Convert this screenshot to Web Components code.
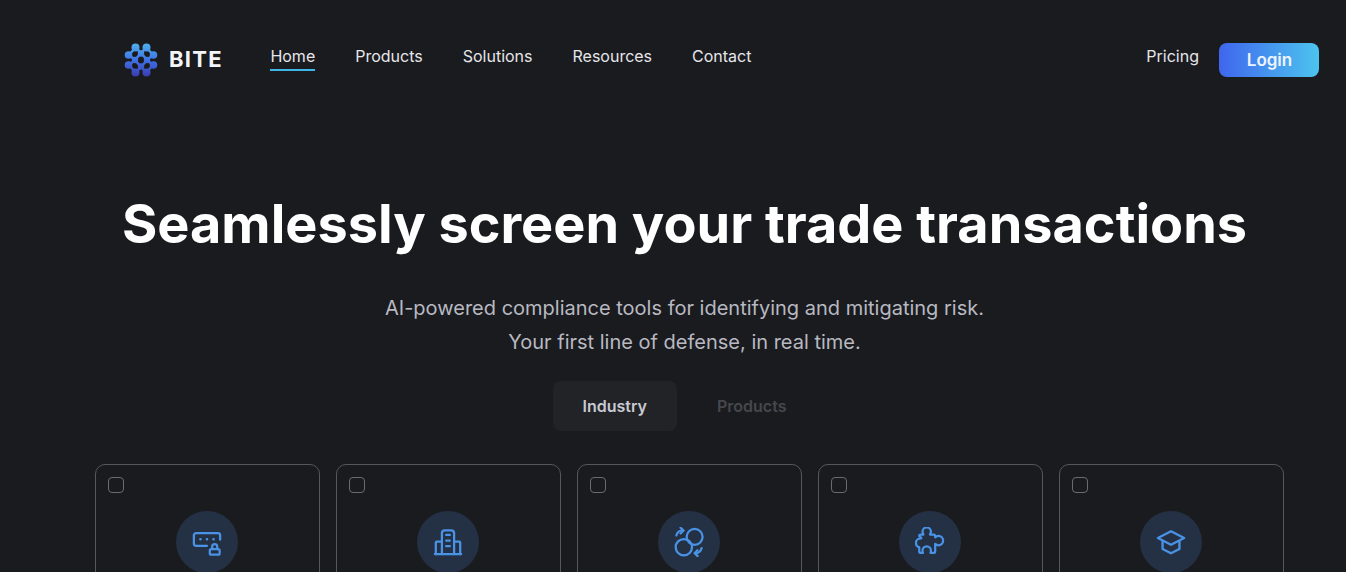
<!DOCTYPE html>
<html>
<head>
<meta charset="utf-8">
<style>
  html, body { margin: 0; height: 572px; overflow: hidden; background: #1a1b1f; }
  body { font-family: Inter, "Liberation Sans", sans-serif; color: #fff; }
</style>
</head>
<body>
<site-header>
  <nav-link active>Home</nav-link>
  <nav-link>Products</nav-link>
  <nav-link>Solutions</nav-link>
  <nav-link>Resources</nav-link>
  <nav-link>Contact</nav-link>
</site-header>
<hero-section>
  <span slot="title">Seamlessly screen your trade transactions</span>
  <span slot="line">AI-powered compliance tools for identifying and mitigating risk.</span>
  <span slot="line">Your first line of defense, in real time.</span>
</hero-section>
<tab-bar></tab-bar>
<card-row>
  <feature-card>
    <svg viewBox="0 0 32 32" fill="none" stroke="currentColor" stroke-width="2.4" stroke-linecap="round" stroke-linejoin="round">
      <path d="M16 20H4.500A2.500 2.500 0 0 1 2 17.500V8.900a2.500 2.500 0 0 1 2.500-2.500h23A2.500 2.500 0 0 1 30 8.900v4.600"/>
      <path d="M9 13h.01M16 13h.01M23 13h.01" stroke-width="2.800"/>
      <rect x="19" y="23.500" width="10.500" height="6" rx="1.600"/>
      <path d="M21.500 23.500V21a2.700 2.700 0 0 1 5.400 0v2.500"/>
    </svg>
  </feature-card>
  <feature-card>
    <svg viewBox="0 0 32 32" fill="none" stroke="currentColor" stroke-width="2.4" stroke-linecap="round" stroke-linejoin="round">
      <path d="M2 29h28"/>
      <path d="M9.500 29V6.500a3 3 0 0 1 3-3h7a3 3 0 0 1 3 3V29"/>
      <path d="M9.500 15.500H4a1 1 0 0 0-1 1V29M22.500 15.500H28a1 1 0 0 1 1 1V29"/>
      <path d="M14 8.500h4M14 14.500h4M14 20.500h4"/>
    </svg>
  </feature-card>
  <feature-card>
    <svg viewBox="0 0 32 32" fill="none" stroke="currentColor" stroke-width="2.4" stroke-linecap="round" stroke-linejoin="round">
      <circle cx="22" cy="10.500" r="8.500"/>
      <circle cx="10.500" cy="21.500" r="8.700"/>
      <path d="M2.500 9a7 7 0 0 1 7-5.500"/>
      <path d="M7 .8l3.200 2.900L7 6.900"/>
      <path d="M29.500 22.500a7 7 0 0 1-7 5.500"/>
      <path d="M25 24.800L22 28l3.200 3"/>
    </svg>
  </feature-card>
  <feature-card>
    <svg viewBox="0 0 32 32" fill="none" stroke="currentColor" stroke-width="2.4" stroke-linecap="round" stroke-linejoin="round">
      <path d="M9 8C8.200 6.500 8 5.800 8 5a4.500 4.500 0 0 1 9 0c0 .8-.2 1.500-1 3h4a1.500 1.500 0 0 1 1.500 1.500V11c1.200-1 2.300-1.500 3.500-1.500a5 5 0 0 1 0 10c-1.200 0-2.300-.5-3.500-1.500v8a1.500 1.500 0 0 1-1.500 1.500h-3.500c.5-.7.500-1.500.5-2.300a4.500 4.500 0 0 0-9 0c0 .8 0 1.600.5 2.300H6A1.500 1.500 0 0 1 4.500 26v-4.500C3 21.500 1 19.500 1 17s2-4.500 4-4.500c1 0 1.500-.3 1.800-.8L4.500 9.500A1.500 1.500 0 0 1 6 8z"/>
    </svg>
  </feature-card>
  <feature-card>
    <svg viewBox="0 0 32 32" fill="none" stroke="currentColor" stroke-width="2.500" stroke-linecap="round" stroke-linejoin="round">
      <path d="M16 4.600L2 11.800 16 19l14-7.200z"/>
      <path d="M7 15v8.500l9 4.500 9-4.500V15"/>
    </svg>
  </feature-card>
</card-row>

<script>
class BiteLogo extends HTMLElement {
  constructor() {
    super();
    this.attachShadow({ mode: "open" });
    this.shadowRoot.innerHTML = `
      <style>
        :host { display: flex; align-items: center; gap: 11px; }
        svg { width: 34px; height: 34px; display: block; }
        span { font-size: 22px; font-weight: 700; letter-spacing: 1.25px; color: #f4f5f7; padding-bottom: 2px; }
      </style>
      <svg viewBox="0 0 34 34">
        <defs>
          <linearGradient id="g" gradientUnits="userSpaceOnUse" x1="17" y1="0" x2="17" y2="34">
            <stop offset="0" stop-color="#4fb4ea"/>
            <stop offset=".5" stop-color="#3f72e6"/>
            <stop offset="1" stop-color="#3b3ab0"/>
          </linearGradient>
        </defs>
        <g fill="none" stroke="url(#g)" stroke-width="2.600" stroke-linecap="round">
          <path d="M11.500 4.500L5 12M22.500 4.500L29 12M5 22l6.500 7.500M29 22l-6.500 7.500"/>
          <path d="M11.500 4.500L17 10l5.500-5.500M11.500 29.500L17 24l5.500 5.500"/>
          <path d="M5 12l6 5-6 5M29 12l-6 5 6 5"/>
          <path d="M11 17l6-7 6 7-6 7z"/>
        </g>
        <g fill="url(#g)">
          <circle cx="11.500" cy="4.500" r="4"/>
          <circle cx="22.500" cy="4.500" r="4"/>
          <circle cx="17" cy="10.500" r="3.200"/>
          <circle cx="4.500" cy="12" r="3.800"/>
          <circle cx="29.500" cy="12" r="3.800"/>
          <circle cx="11" cy="17" r="3.200"/>
          <circle cx="23" cy="17" r="3.200"/>
          <circle cx="4.500" cy="22" r="3.800"/>
          <circle cx="29.500" cy="22" r="3.800"/>
          <circle cx="17" cy="23.500" r="3.200"/>
          <circle cx="11.500" cy="29.500" r="4"/>
          <circle cx="22.500" cy="29.500" r="4"/>
        </g>
      </svg>
      <span>BITE</span>
    `;
  }
}
customElements.define("bite-logo", BiteLogo);

class NavLink extends HTMLElement {
  constructor() {
    super();
    this.attachShadow({ mode: "open" });
    this.shadowRoot.innerHTML = `
      <style>
        :host { display: block; font-size: 16px; line-height: 23px; padding-bottom: 1px; color: #e6e6ea; border-bottom: 2px solid transparent; cursor: pointer; }
        :host([active]) { border-bottom-color: #3fb6e8; }
      </style>
      <slot></slot>
    `;
  }
}
customElements.define("nav-link", NavLink);

class SiteHeader extends HTMLElement {
  constructor() {
    super();
    this.attachShadow({ mode: "open" });
    this.shadowRoot.innerHTML = `
      <style>
        :host { display: flex; align-items: center; height: 119px; box-sizing: border-box; padding: 0 27px 0 124px; }
        nav { display: flex; gap: 40px; margin: 0 0 3px 47.6px; }
        .end { margin-left: auto; display: flex; align-items: center; gap: 20px; }
        .pricing { font-size: 16px; color: #e6e6ea; padding-bottom: 8px; }
        button { width: 100px; height: 34px; border: 0; border-radius: 8px; padding: 0 0 0 1px; background: linear-gradient(90deg, #3f66ee, #4cc4ee); color: #eef4ff; font: 600 17px Inter, sans-serif; }
      </style>
      <bite-logo></bite-logo>
      <nav><slot></slot></nav>
      <div class="end">
        <span class="pricing">Pricing</span>
        <button>Login</button>
      </div>
    `;
  }
}
customElements.define("site-header", SiteHeader);

class HeroSection extends HTMLElement {
  constructor() {
    super();
    this.attachShadow({ mode: "open" });
    this.shadowRoot.innerHTML = `
      <style>
        :host { display: block; text-align: center; padding: 69px 0 0 23px; }
        h1 { margin: 0; font-size: 54px; line-height: 72px; font-weight: 700; color: #fff; }
        .sub { margin-top: 31px; font-size: 20px; line-height: 34px; color: #b8b9c1; display: flex; flex-direction: column; }
      </style>
      <h1><slot name="title"></slot></h1>
      <div class="sub"><slot name="line"></slot></div>
    `;
  }
}
customElements.define("hero-section", HeroSection);

class TabBar extends HTMLElement {
  constructor() {
    super();
    this.attachShadow({ mode: "open" });
    this.shadowRoot.innerHTML = `
      <style>
        :host { display: flex; justify-content: center; gap: 10px; margin-top: 22px; padding-left: 23px; font-size: 16px; font-weight: 600; }
        div { padding: 0 30px; height: 50px; line-height: 50px; border-radius: 8px; color: #46474d; }
        .on { background: #222327; color: #c9cad2; }
      </style>
      <div class="on">Industry</div>
      <div>Products</div>
    `;
  }
}
customElements.define("tab-bar", TabBar);

class CardRow extends HTMLElement {
  constructor() {
    super();
    this.attachShadow({ mode: "open" });
    this.shadowRoot.innerHTML = `
      <style>
        :host { display: grid; grid-template-columns: repeat(5, 225px); gap: 16px; margin-top: 33px; padding-left: 95px; }
      </style>
      <slot></slot>
    `;
  }
}
customElements.define("card-row", CardRow);

class FeatureCard extends HTMLElement {
  constructor() {
    super();
    this.attachShadow({ mode: "open" });
    this.shadowRoot.innerHTML = `
      <style>
        :host { display: block; height: 240px; box-sizing: border-box; border: 1px solid #56575b; border-radius: 10px; padding: 12px; }
        .check { width: 16px; height: 16px; box-sizing: border-box; border: 1px solid #6a6b70; border-radius: 4px; }
        .disc { width: 62px; height: 62px; border-radius: 50%; background: #243145; margin: 18px 0 0 68px; display: flex; align-items: center; justify-content: center; color: #4a92e6; }
        ::slotted(svg) { width: 30px; height: 30px; display: block; }
      </style>
      <div class="check"></div>
      <div class="disc"><slot></slot></div>
    `;
  }
}
customElements.define("feature-card", FeatureCard);
</script>
</body>
</html>
